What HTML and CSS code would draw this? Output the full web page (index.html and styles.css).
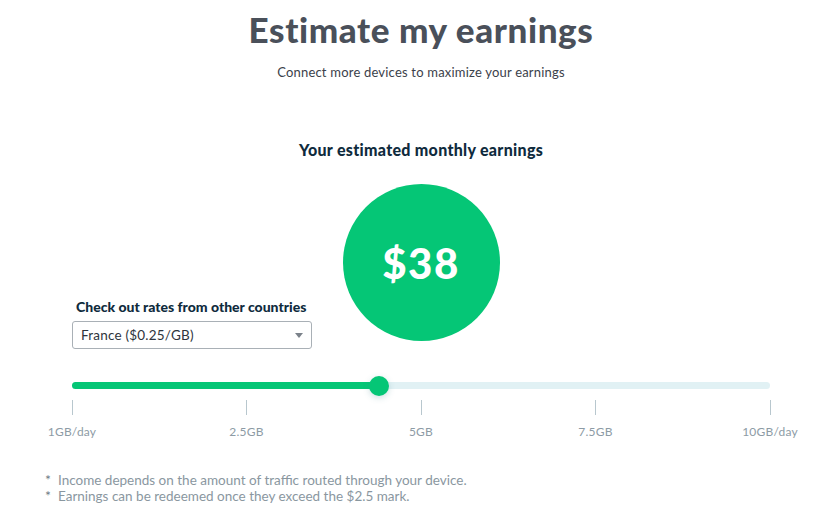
FILE: index.html
```html
<!DOCTYPE html>
<html lang="en">
<head>
<meta charset="utf-8">
<title>Estimate my earnings</title>
<link rel="stylesheet" href="styles.css">
</head>
<body>
<main class="page">
  <h1 class="title">Estimate my earnings</h1>
  <p class="subtitle">Connect more devices to maximize your earnings</p>
  <h2 class="estimate-label">Your estimated monthly earnings</h2>
  <div class="result-row">
    <div class="country">
      <label class="country-label" for="country">Check out rates from other countries</label>
      <div class="select">
        <span class="select-value">France ($0.25/GB)</span>
        <svg class="select-arrow" width="8" height="5" viewBox="0 0 8 5"><path d="M0 0h8L4 5z" fill="#7b828a"/></svg>
      </div>
    </div>
    <div class="circle"><span class="amount">$38</span></div>
    <div class="spacer"></div>
  </div>
  <div class="slider">
    <div class="track">
      <div class="fill" style="width: 44%"></div>
      <div class="thumb" style="left: 44%"></div>
    </div>
  </div>
  <div class="scale">
    <div class="mark"><span class="tick"></span><span class="mark-label">1GB/day</span></div>
    <div class="mark"><span class="tick"></span><span class="mark-label">2.5GB</span></div>
    <div class="mark"><span class="tick"></span><span class="mark-label">5GB</span></div>
    <div class="mark"><span class="tick"></span><span class="mark-label">7.5GB</span></div>
    <div class="mark"><span class="tick"></span><span class="mark-label">10GB/day</span></div>
  </div>
  <ul class="notes">
    <li>Income depends on the amount of traffic routed through your device.</li>
    <li>Earnings can be redeemed once they exceed the $2.5 mark.</li>
  </ul>
</main>
</body>
</html>
```
FILE: styles.css
```css
* { box-sizing: border-box; }
html, body { margin: 0; padding: 0; background: #ffffff; }
body { font-family: "Lato", "Noto Sans", sans-serif; width: 834px; height: 516px; overflow: hidden; }
.page { display: flex; flex-direction: column; padding-left: 8px; }

.title {
  margin: 9px 0 0;
  text-align: center;
  font-size: 35px;
  line-height: 40px;
  font-weight: 900;
  color: #4a505a;
  letter-spacing: 0.6px;
}
.subtitle {
  margin: 15px 0 0;
  text-align: center;
  font-size: 13px;
  line-height: 16px;
  color: #3b414a;
  letter-spacing: 0.2px;
}
.estimate-label {
  margin: 61px 0 0;
  text-align: center;
  font-size: 16px;
  line-height: 18px;
  font-weight: 900;
  color: #0f2b3d;
  letter-spacing: 0.3px;
}
.result-row {
  margin-top: 25px;
  display: grid;
  grid-template-columns: 1fr auto 1fr;
}
.country {
  align-self: end;
  padding-left: 64px;
  display: flex;
  flex-direction: column;
  gap: 6px;
}
.country-label {
  font-size: 14px;
  line-height: 16px;
  font-weight: 900;
  color: #0f2b3d;
  padding-left: 4px;
  white-space: nowrap;
}
.select {
  width: 240px;
  height: 28px;
  border: 1px solid #a9b0b6;
  border-radius: 3px;
  display: flex;
  align-items: center;
  justify-content: space-between;
  padding: 0 8px 0 8px;
}
.select-value { font-size: 13.5px; color: #2e343c; letter-spacing: 0.2px; }
.circle {
  width: 157px;
  height: 157px;
  border-radius: 50%;
  background: #05c676;
  display: flex;
  align-items: center;
  justify-content: center;
  margin-bottom: 8px;
}
.amount { color: #fff; font-size: 42px; font-weight: 900; letter-spacing: 1.5px; }

.slider { margin-top: 33px; padding: 0 64px; }
.track {
  position: relative;
  height: 7px;
  border-radius: 4px;
  background: #e1f1f4;
}
.fill { height: 7px; border-radius: 4px; background: #05c676; }
.thumb {
  position: absolute;
  top: 50%;
  width: 20px;
  height: 20px;
  margin: -10px 0 0 -10px;
  border-radius: 50%;
  background: #05c676;
  box-shadow: 0 2px 6px rgba(60, 130, 140, 0.25);
}
.scale {
  margin-top: 11px;
  padding: 0 64px;
  display: flex;
  justify-content: space-between;
}
.mark { width: 0; display: flex; flex-direction: column; align-items: center; }
.tick { width: 1px; height: 15px; background: #b8c7ce; }
.mark-label {
  margin-top: 10px;
  font-size: 12px;
  line-height: 14px;
  color: #8d9ba5;
  white-space: nowrap;
  letter-spacing: 0.2px;
}
.notes {
  list-style: none;
  margin: 33px 0 0;
  padding: 0 0 0 37px;
  font-size: 13.5px;
  line-height: 16px;
  color: #8a979f;
}
.notes li::before { content: "*"; margin-right: 7px; color: #6f7c85; font-size: 14px; }
```
